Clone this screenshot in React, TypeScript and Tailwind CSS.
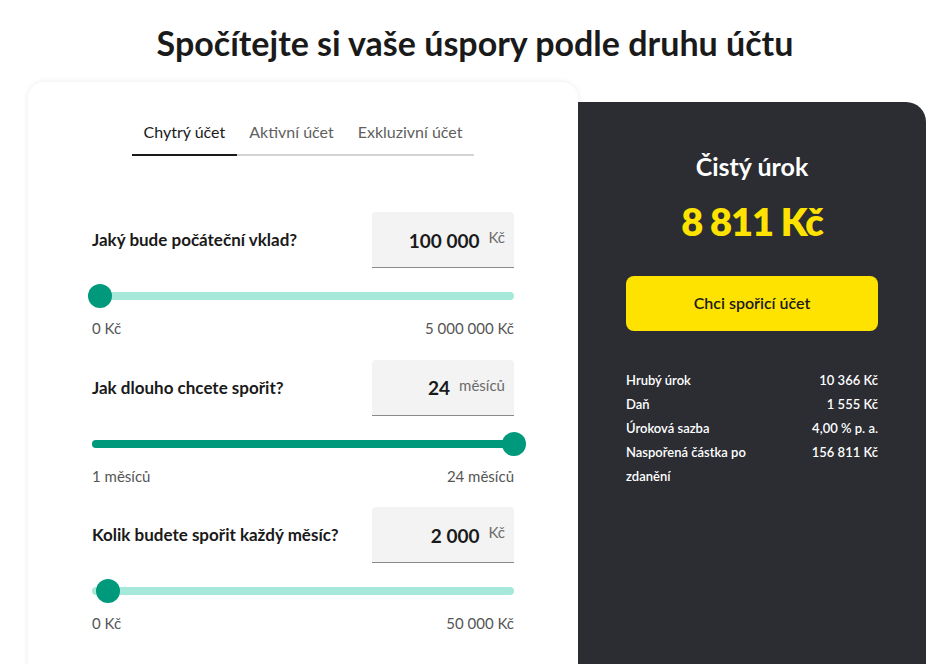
const font = { fontFamily: 'Lato, "Noto Sans", sans-serif' };

type Row = {
  label: string;
  value: string;
  unit: string;
  min: string;
  max: string;
  pct: number;
};

const rows: Row[] = [
  { label: 'Jaký bude počáteční vklad?', value: '100 000', unit: 'Kč', min: '0 Kč', max: '5 000 000 Kč', pct: 2 },
  { label: 'Jak dlouho chcete spořit?', value: '24', unit: 'měsíců', min: '1 měsíců', max: '24 měsíců', pct: 100 },
  { label: 'Kolik budete spořit každý měsíc?', value: '2 000', unit: 'Kč', min: '0 Kč', max: '50 000 Kč', pct: 3.8 },
];

function Slider({ pct }: { pct: number }) {
  return (
    <div className="relative h-6 flex items-center">
      <div className="h-2 w-full rounded-full bg-[#a6e8d9]" />
      {pct > 50 && <div className="absolute left-0 h-2 rounded-full bg-[#00997b]" style={{ width: `${pct}%` }} />}
      <div
        className="absolute w-6 h-6 rounded-full bg-[#00997b] -translate-x-1/2"
        style={{ left: `${pct}%` }}
      />
    </div>
  );
}

function InputRow({ row }: { row: Row }) {
  return (
    <div className="flex flex-col">
      <div className="flex items-center justify-between">
        <span className="text-[17px] font-bold text-[#1a1a1a]">{row.label}</span>
        <div className="w-[142px] h-[56px] bg-[#f3f3f3] rounded-t border-b border-[#8a8a8a] flex items-center justify-end pr-[9px] gap-[9px]">
          <span className="text-[19px] font-bold text-[#1a1a1a] mt-[3px]">{row.value}</span>
          <span className="text-[15px] text-[#6b6b6b] self-start mt-[14px]">{row.unit}</span>
        </div>
      </div>
      <div className="mt-[16px]">
        <Slider pct={row.pct} />
      </div>
      <div className="flex justify-between mt-[9px] text-[15px] text-[#555]">
        <span>{row.min}</span>
        <span>{row.max}</span>
      </div>
    </div>
  );
}

const stats = [
  ['Hrubý úrok', '10 366 Kč'],
  ['Daň', '1 555 Kč'],
  ['Úroková sazba', '4,00 % p. a.'],
  ['Naspořená částka po zdanění', '156 811 Kč'],
];

export default function App() {
  return (
    <div className="min-h-[664px] bg-white overflow-hidden" style={font}>
      <h1 className="text-center text-[34px] font-bold text-[#1a1a1a] pt-[21px] leading-[44px]">
        Spočítejte si vaše úspory podle druhu účtu
      </h1>
      <div className="flex items-start ml-[28px] mt-[17px]">
        <div className="w-[550px] h-[600px] bg-white rounded-[16px] shadow-[0_0_6px_rgba(0,0,0,0.08)] px-[64px] pt-[38px]">
          <div className="flex justify-center">
            <div className="flex border-b-2 border-[#d4d4d4]">
              <button className="px-3 pb-[10px] text-[16px] text-[#1a1a1a] border-b-2 border-[#1a1a1a] -mb-[2px]">Chytrý účet</button>
              <button className="px-3 pb-[10px] text-[16px] text-[#5f5f5f]">Aktivní účet</button>
              <button className="px-3 pb-[10px] text-[16px] text-[#5f5f5f]">Exkluzivní účet</button>
            </div>
          </div>
          <div className="flex flex-col gap-[20px] mt-[56px]">
            {rows.map((r) => (
              <InputRow key={r.label} row={r} />
            ))}
          </div>
        </div>
        <div className="w-[348px] h-[580px] mt-[20px] bg-[#2b2d33] rounded-tr-[20px] px-[48px] pt-[46px] flex flex-col">
          <div className="text-center text-white text-[25px] font-bold">Čistý úrok</div>
          <div className="text-center text-[#ffe300] text-[38px] font-extrabold tracking-[-1px] mt-[10px] leading-[50px]">8 811 Kč</div>
          <button className="mt-[30px] h-[55px] rounded-[8px] bg-[#ffe300] text-[16px] font-semibold text-[#1a1a1a]">
            Chci spořicí účet
          </button>
          <div className="mt-[37px] flex flex-col text-white text-[13px] font-semibold leading-[24px]">
            {stats.map(([k, v]) => (
              <div key={k} className="flex justify-between">
                <span className="w-[150px]">{k}</span>
                <span>{v}</span>
              </div>
            ))}
          </div>
        </div>
      </div>
    </div>
  );
}
